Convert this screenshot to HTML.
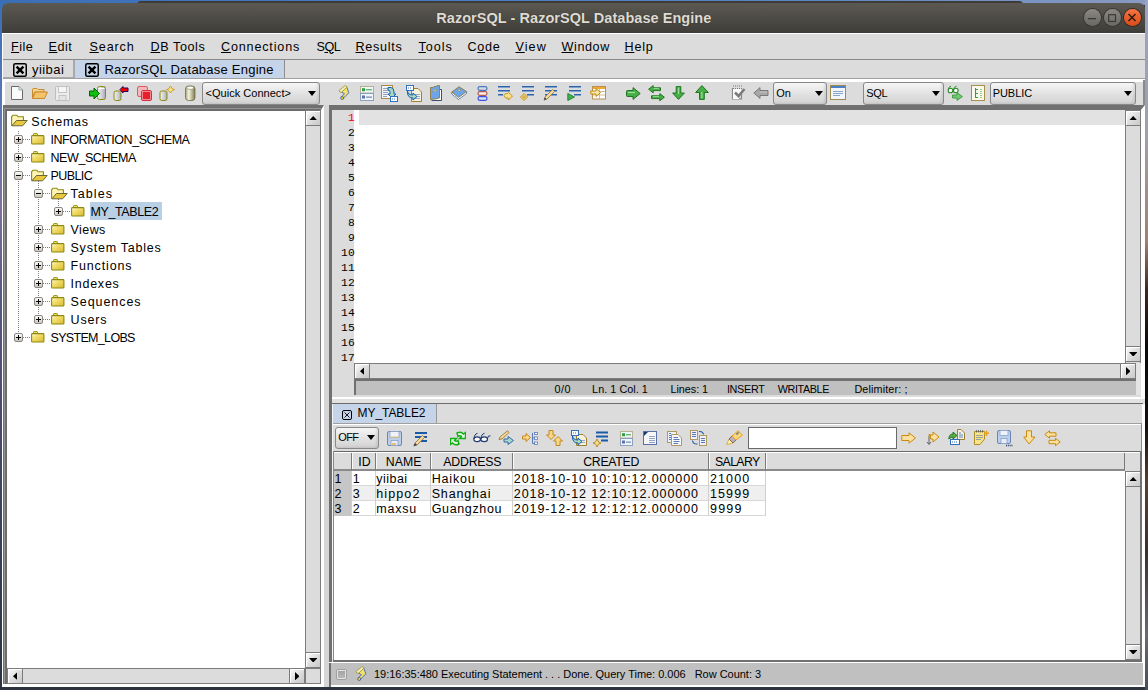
<!DOCTYPE html>
<html><head><meta charset="utf-8">
<style>
*{box-sizing:border-box;margin:0;padding:0}
html,body{width:1148px;height:690px;overflow:hidden}
body{position:relative;background:#2e3340;font-family:"Liberation Sans",sans-serif;color:#000}
.a{position:absolute}
.t{position:absolute;white-space:pre;line-height:1}
u{text-decoration:underline;text-underline-offset:0.5px;text-decoration-thickness:1px}

</style></head><body>
<div class="a" style="left:0px;top:0px;width:1148px;height:690px;background:#2e3340"></div>
<div class="a" style="left:0px;top:0px;width:1148px;height:5px;background:linear-gradient(90deg,#3a6fb6,#4a7cc0 40%,#5b86c2 70%,#8a9ac0)"></div>
<div class="a" style="left:0px;top:0px;width:3px;height:690px;background:linear-gradient(#3a6fb8,#5a78b8 15%,#8070a0 30%,#5a5a88 42%,#4a4a70 60%,#3a4058 80%,#2e3340)"></div>
<div class="a" style="left:1145px;top:0px;width:3px;height:690px;background:linear-gradient(#9aa3c4 0%,#a0a0a8 20%,#a08070 35%,#402820 42%,#0a0a0a 50%,#141010 62%,#5a4030 70%,#3a3030 80%,#6a6a72 92%,#4a4d58)"></div>
<div class="a" style="left:137px;top:1px;width:886px;height:4px;background:#3d3c38;border-radius:4px 4px 0 0"></div>
<div class="a" style="left:2px;top:3px;width:1143px;height:30px;border-radius:6px 6px 0 0;background:linear-gradient(#5c5952,#4a4843 60%,#3f3d39)"></div>
<div class="t" style="letter-spacing:0.045px;left:436.30px;top:11.03px;font-size:14.5px;font-weight:bold;color:#dfdbd2;font-family:'Liberation Sans';text-shadow:0 0 1px #2a2925">RazorSQL - RazorSQL Database Engine</div>
<div class="a" style="left:1083.5px;top:9px;width:17px;height:17px;border-radius:50%;background:linear-gradient(#8a8883,#76746f 60%,#6a6864);box-shadow:0 0 0 1px #38362f"></div>
<div class="a" style="left:1103.5px;top:9px;width:17px;height:17px;border-radius:50%;background:linear-gradient(#8a8883,#76746f 60%,#6a6864);box-shadow:0 0 0 1px #38362f"></div>
<div class="a" style="left:1123.5px;top:9px;width:17px;height:17px;border-radius:50%;background:linear-gradient(#f57545,#e65a28 60%,#d94d1c);box-shadow:0 0 0 1px #3a2a20"></div>
<svg class="a" style="left:1086px;top:11px;" width="12" height="12" viewBox="0 0 12 12"><rect x="2" y="7" width="8" height="1.3" fill="#3a3935"/></svg>
<svg class="a" style="left:1106px;top:11px;" width="12" height="12" viewBox="0 0 12 12"><rect x="2.7" y="3.7" width="6.8" height="6.8" fill="none" stroke="#3a3935" stroke-width="1.2"/></svg>
<svg class="a" style="left:1126px;top:11px;" width="12" height="12" viewBox="0 0 12 12"><path d="M2.5 3 L9.5 10 M9.5 3 L2.5 10" stroke="#2a1a10" stroke-width="1.5"/></svg>
<div class="a" style="left:2px;top:33px;width:1143px;height:654px;background:#fff"></div>
<div class="a" style="left:3px;top:34px;width:1142px;height:651px;background:#dcdcdc"></div>
<div class="a" style="left:3px;top:59px;width:1142px;height:1px;background:#8a8a8a"></div>
<div class="t" style="letter-spacing:0.488px;left:11.00px;top:40.53px;font-size:12.6px;font-weight:normal;color:#000;font-family:'Liberation Sans';"><u>F</u>ile</div>
<div class="t" style="letter-spacing:0.519px;left:48.50px;top:40.53px;font-size:12.6px;font-weight:normal;color:#000;font-family:'Liberation Sans';"><u>E</u>dit</div>
<div class="t" style="letter-spacing:0.871px;left:89.50px;top:40.53px;font-size:12.6px;font-weight:normal;color:#000;font-family:'Liberation Sans';"><u>S</u>earch</div>
<div class="t" style="letter-spacing:0.584px;left:150.50px;top:40.53px;font-size:12.6px;font-weight:normal;color:#000;font-family:'Liberation Sans';"><u>D</u>B Tools</div>
<div class="t" style="letter-spacing:0.824px;left:221.00px;top:40.53px;font-size:12.6px;font-weight:normal;color:#000;font-family:'Liberation Sans';"><u>C</u>onnections</div>
<div class="t" style="letter-spacing:-0.472px;left:316.50px;top:40.53px;font-size:12.6px;font-weight:normal;color:#000;font-family:'Liberation Sans';">S<u>Q</u>L</div>
<div class="t" style="letter-spacing:0.710px;left:355.50px;top:40.53px;font-size:12.6px;font-weight:normal;color:#000;font-family:'Liberation Sans';"><u>R</u>esults</div>
<div class="t" style="letter-spacing:0.963px;left:418.50px;top:40.53px;font-size:12.6px;font-weight:normal;color:#000;font-family:'Liberation Sans';"><u>T</u>ools</div>
<div class="t" style="letter-spacing:0.717px;left:467.50px;top:40.53px;font-size:12.6px;font-weight:normal;color:#000;font-family:'Liberation Sans';">C<u>o</u>de</div>
<div class="t" style="letter-spacing:1.061px;left:515.50px;top:40.53px;font-size:12.6px;font-weight:normal;color:#000;font-family:'Liberation Sans';"><u>V</u>iew</div>
<div class="t" style="letter-spacing:0.593px;left:561.50px;top:40.53px;font-size:12.6px;font-weight:normal;color:#000;font-family:'Liberation Sans';"><u>W</u>indow</div>
<div class="t" style="letter-spacing:0.785px;left:624.50px;top:40.53px;font-size:12.6px;font-weight:normal;color:#000;font-family:'Liberation Sans';"><u>H</u>elp</div>
<div class="a" style="left:3px;top:60px;width:70px;height:17px;background:#dcdcdc"></div>
<div class="a" style="left:73px;top:60px;width:2px;height:18px;background:#a9a9a9"></div>
<div class="a" style="left:3px;top:77px;width:70px;height:1px;background:#a9a9a9"></div>
<div class="a" style="left:75px;top:60px;width:209px;height:18px;background:#c5d4e8"></div>
<div class="a" style="left:284px;top:60px;width:1px;height:18px;background:#8e8e8e"></div>
<div class="a" style="left:3px;top:78px;width:1142px;height:1px;background:#a0a0a0"></div>
<div class="a" style="left:2px;top:79px;width:1143px;height:3px;background:#fff"></div>
<svg class="a" style="left:13px;top:63px;" width="14" height="14" viewBox="0 0 14 14"><rect x="0.75" y="0.75" width="12.5" height="12.5" rx="1.5" fill="none" stroke="#000" stroke-width="1.5"/><path d="M3.6 3.6 L10.4 10.4 M10.4 3.6 L3.6 10.4" stroke="#000" stroke-width="2.5"/></svg>
<div class="t" style="letter-spacing:0.435px;left:32.00px;top:62.80px;font-size:13px;font-weight:normal;color:#000;font-family:'Liberation Sans';">yiibai</div>
<svg class="a" style="left:85px;top:63px;" width="14" height="14" viewBox="0 0 14 14"><rect x="0.75" y="0.75" width="12.5" height="12.5" rx="1.5" fill="none" stroke="#000" stroke-width="1.5"/><path d="M3.6 3.6 L10.4 10.4 M10.4 3.6 L3.6 10.4" stroke="#000" stroke-width="2.5"/></svg>
<div class="t" style="letter-spacing:0.236px;left:104.50px;top:62.80px;font-size:13px;font-weight:normal;color:#000;font-family:'Liberation Sans';">RazorSQL Database Engine</div>
<div class="a" style="left:3px;top:82px;width:2px;height:23px;background:#fff"></div>
<div class="a" style="left:1143px;top:80px;width:2px;height:27px;background:#8a8a8a"></div>
<svg class="a" style="left:11px;top:86px;" width="12" height="14" viewBox="0 0 12 14"><path d="M0.5 0.5 H8 L11.5 4 V13.5 H0.5 Z" fill="#fafafa" stroke="#6a6a6a"/><path d="M8 0.5 V4 H11.5" fill="#d8e4f0" stroke="#9aa"/></svg>
<svg class="a" style="left:32px;top:88px;" width="16" height="11" viewBox="0 0 16 11"><path d="M0.5 1.5 Q0.5 0.5 1.5 0.5 H5 L6 1.5 H12 V4 H2.5 L0.5 10.5 Z" fill="#f6d58e" stroke="#c98a2e"/><path d="M0.5 10.5 L3.5 4 H15.5 L12.5 10.5 Z" fill="#f3c36a" stroke="#c98a2e"/></svg>
<svg class="a" style="left:55px;top:86px;" width="15" height="15" viewBox="0 0 15 15"><rect x="0.5" y="0.5" width="14" height="14" rx="1" fill="#ececec" stroke="#bdbdbd"/><rect x="3.5" y="0.5" width="8" height="6" fill="#f6f6f6" stroke="#c4c4c4"/><rect x="4" y="9.5" width="7" height="5" fill="#e4e4e4" stroke="#c4c4c4"/></svg>
<svg class="a" style="left:89px;top:86px;" width="18" height="15" viewBox="0 0 18 15"><defs><linearGradient id="cg2" x1="0" x2="1"><stop offset="0" stop-color="#f0f0f0"/><stop offset=".5" stop-color="#d4d4d4"/><stop offset="1" stop-color="#a8a8b8"/></linearGradient></defs><rect x="8.5" y="0.5" width="8" height="13" rx="2" fill="url(#cg2)" stroke="#8b8b14"/><path d="M9.5 2.5 H15.5" stroke="#fff" stroke-width="1"/><path d="M0.5 5 H5 V2 L10.5 7.5 L5 13 V10 H0.5 Z" fill="#10c010" stroke="#086008"/></svg>
<svg class="a" style="left:113px;top:86px;" width="16" height="15" viewBox="0 0 16 15"><rect x="1" y="5" width="7" height="9.5" rx="1.8" fill="url(#cg2)" stroke="#8b8b14"/><path d="M7 3.5 L10 0.5 V2 H15 V5.5 H10 V7 Z" fill="#f00" stroke="#200060" stroke-width="1"/></svg>
<svg class="a" style="left:137px;top:86px;" width="15" height="15" viewBox="0 0 15 15"><rect x="0.5" y="0.5" width="10" height="10" rx="1.5" fill="#f4b8bc" stroke="#e05a64"/><rect x="4.5" y="4.5" width="10" height="10" rx="1.5" fill="#e8202e" stroke="#d03040"/><rect x="5.5" y="5.5" width="8" height="8" fill="none" stroke="#f6a0a8" stroke-width="0.8"/></svg>
<svg class="a" style="left:159px;top:85px;" width="16" height="16" viewBox="0 0 16 16"><rect x="1" y="6" width="7" height="9.5" rx="1.8" fill="url(#cg2)" stroke="#8b8b14"/><path d="M11.5 1 L13.5 4 L15.5 4.5 L13.5 5.5 L11.5 8 L9.5 5.5 L7.5 4.5 L9.5 4 Z" fill="#f6e08a" stroke="#c8961e" stroke-width="0.9"/></svg>
<svg class="a" style="left:185px;top:85px;" width="11" height="16" viewBox="0 0 11 16"><defs><linearGradient id="cyl" x1="0" x2="1"><stop offset="0" stop-color="#a8a67a"/><stop offset=".35" stop-color="#f4f2da"/><stop offset="1" stop-color="#7e7c54"/></linearGradient></defs><rect x="0.5" y="1" width="9.5" height="14.5" rx="3" fill="url(#cyl)" stroke="#6e6c46" stroke-width="0.8"/><ellipse cx="5.25" cy="2.8" rx="3.6" ry="1.6" fill="#fff" stroke="#8e8c66" stroke-width="0.7"/></svg>
<div class="a" style="left:202px;top:82px;width:118px;height:23px;border:1px solid #888;border-radius:3px;background:linear-gradient(#f6f6f6,#e4e4e4 45%,#d2d2d2);box-shadow:inset -2px -1px 2px rgba(0,0,0,.08)"></div>
<div class="t" style="letter-spacing:0.030px;left:205.50px;top:88.29px;font-size:11px;font-weight:normal;color:#000;font-family:'Liberation Sans';">&lt;Quick Connect&gt;</div>
<svg class="a" style="left:308.0px;top:90.5px;" width="8" height="5" viewBox="0 0 8 5"><polygon points="0,0 8,0 4.0,5" fill="#000"/></svg>
<svg class="a" style="left:338px;top:85px;" width="12" height="15" viewBox="0 0 12 15"><path d="M3.5 7 L8.8 2.2 L10.8 7.8 L5.2 13.5 L3.2 12 L6.5 8.8 Z" fill="#f2e46a" stroke="#4a64a8" stroke-width="0.9"/><path d="M1 5.6 L6.6 0.9 Q8.6 0.3 9 2.2 L3.5 7.2 Q1.4 7.6 1 5.6 Z" fill="#f2eeb4" stroke="#a89a44" stroke-width="0.9"/><circle cx="4.2" cy="13" r="1.5" fill="#f6dc20" stroke="#3a54a0" stroke-width="0.8"/></svg>
<svg class="a" style="left:360px;top:86px;" width="14" height="15" viewBox="0 0 14 15"><rect x="0.5" y="0.5" width="13" height="6.5" fill="#eef6fa" stroke="#b8b090"/><rect x="0.5" y="7.5" width="13" height="7" fill="#eef6fa" stroke="#8ca0c0"/><rect x="2" y="2.2" width="3" height="3" fill="#30a040"/><rect x="6" y="3.3" width="6" height="1" fill="#30a040"/><rect x="2" y="9.5" width="3" height="3" fill="#6070a8"/><rect x="6" y="10.6" width="6" height="1" fill="#6070a8"/></svg>
<svg class="a" style="left:381px;top:85px;" width="17" height="17" viewBox="0 0 17 17"><rect x="0.5" y="0.5" width="11" height="13" fill="#f2f4f8" stroke="#b08840"/><path d="M2 3.5 H8 M2 5.5 H8 M2 7.5 H7 M2 9.5 H7 M2 11.5 H6" stroke="#8898b8" stroke-width="0.9"/><path d="M7 2.5 H10 Q13 3 13 7 V9 H15 L11 13 L7 9 H9 V7 Q9 5 7 5 Z" fill="#a8d8c0" stroke="#1060b0" stroke-width="1"/><rect x="9.5" y="11.5" width="7" height="5" fill="#fff" stroke="#3070c0"/><path d="M11 14 H15" stroke="#3070c0" stroke-dasharray="1 1"/></svg>
<svg class="a" style="left:406px;top:85px;" width="16" height="17" viewBox="0 0 16 17"><path d="M5.5 3.5 H12 L15.5 7 V16.5 H5.5 Z" fill="#f6f2e2" stroke="#a08030"/><path d="M9 9.5 H14 M9 11.5 H14 M9 13.5 H14" stroke="#90a0c0" stroke-width="0.9"/><rect x="0.5" y="0.5" width="7" height="5" fill="#fff" stroke="#3070c0"/><path d="M2 3 H6" stroke="#3070c0" stroke-dasharray="1 1"/><path d="M1.5 6 Q2 10 7 10 V8 L11 11.5 L7 15 V13 Q1 13 1.5 6 Z" fill="#a8d8c0" stroke="#1060b0" stroke-width="1"/></svg>
<svg class="a" style="left:430px;top:85px;" width="12" height="16" viewBox="0 0 12 16"><path d="M9.5 4.5 H11.5 V15.5 H1.5" fill="#fff" stroke="#2a3a5a" stroke-width="0.9"/><path d="M0.5 2.5 L3 2.5 L4 1.5 L6 1.5 L7 0.8 L9.5 0.5 V13 L7 13.5 L6 14 L4 14 L0.5 14.5 Z" fill="#6ea4e8" stroke="#8a7a40" stroke-width="0.9"/><path d="M2.5 6.5 L4 5 L7 4.5 L5.5 6 Z" fill="#fff" stroke="#a08840" stroke-width="0.7"/></svg>
<svg class="a" style="left:451px;top:86px;" width="16" height="14" viewBox="0 0 16 14"><path d="M0.8 6 V8 L7.5 13.5 L15.5 7.5 V5.5" fill="#fff" stroke="#4a6a8a" stroke-width="0.8"/><path d="M0.8 6 L8 0.8 L15.5 5.5 L7.5 11.5 Z" fill="#6ea4e8" stroke="#8a7a40" stroke-width="0.9"/><path d="M6.5 4.5 L8 3.5 L10 4 L8.5 5 Z" fill="#fff" stroke="#a08840" stroke-width="0.7"/></svg>
<svg class="a" style="left:477px;top:86px;" width="11" height="15" viewBox="0 0 11 15"><rect x="1" y="0.7" width="9" height="3.6" rx="1.8" fill="#d8dce0" stroke="#4a78c0" stroke-width="1.2"/><rect x="1" y="5.7" width="9" height="3.6" rx="1.8" fill="#fff0e8" stroke="#b05a50" stroke-width="1.2"/><rect x="1" y="10.7" width="9" height="3.6" rx="1.8" fill="#d8e0f4" stroke="#3a50e0" stroke-width="1.2"/></svg>
<svg class="a" style="left:498px;top:85px;" width="16" height="16" viewBox="0 0 16 16"><path d="M0 1.8 H12 M0 5.8 H12 M0 9.8 H5" stroke="#2a64b0" stroke-width="1.6"/><path d="M6 10.5 Q7 8 9.5 8.5 L10.5 7.5 L14.5 11 L10.5 15 L10 13 Q9 12 8 13.5 Z" fill="#fbe08a" stroke="#c08a10" stroke-width="0.9"/></svg>
<svg class="a" style="left:520px;top:85px;" width="15" height="16" viewBox="0 0 15 16"><path d="M2 1.8 H14 M2 5.8 H14 M7 9.8 H14" stroke="#2a64b0" stroke-width="1.6"/><path d="M4 8.5 L7.5 12 L4 15.5 L0.5 12 Z" fill="#fbe8a0" stroke="#c08a10" stroke-width="1"/><path d="M4 10 V14 M2 12 H6" stroke="#c08a10" stroke-width="0.8"/></svg>
<svg class="a" style="left:543px;top:85px;" width="15" height="16" viewBox="0 0 15 16"><path d="M2 1.8 H14 M2 5.8 H14 M2 9.8 H14" stroke="#2a64b0" stroke-width="1.6"/><path d="M1 15 L2 12 L9.5 4.5 L11.5 6.5 L4 14 Z" fill="#f0d8a0" stroke="#a07830" stroke-width="0.9"/><path d="M1 15 L1.8 12.5 L3.5 14.2 Z" fill="#203a70"/></svg>
<svg class="a" style="left:567px;top:85px;" width="15" height="16" viewBox="0 0 15 16"><path d="M2 1.8 H14 M2 5.8 H14 M7 9.8 H14" stroke="#2a64b0" stroke-width="1.6"/><path d="M0.8 8.5 L7.5 12 L0.8 15.5 Z" fill="#40b050" stroke="#208030" stroke-width="0.9"/></svg>
<svg class="a" style="left:590px;top:86px;" width="16" height="14" viewBox="0 0 16 14"><rect x="2.5" y="0.5" width="13" height="12.5" fill="#fff" stroke="#b89050"/><rect x="3" y="1" width="12" height="2" fill="#f0a830"/><path d="M3 5.5 H15 M3 9 H15 M9.5 3 V13" stroke="#c8b080" stroke-width="0.8"/><path d="M0.8 5 H6 V2.5 L10.5 6.5 L6 10.5 V8 H0.8 Z" fill="#fbe8a8" stroke="#c08a10" stroke-width="1"/></svg>
<svg class="a" style="left:626px;top:87px;" width="15" height="13" viewBox="0 0 15 13"><path d="M1.5 3.5 H7 V0.6 L14.2 6.5 L7 12.4 V9.5 H1.5 Q0.5 9.5 0.5 8.5 V4.5 Q0.5 3.5 1.5 3.5 Z" fill="#46b046" stroke="#176a17" stroke-width="0.9" stroke-linejoin="round"/><path d="M2 5.5 H9" stroke="#9ae09a" stroke-width="1.2"/></svg>
<svg class="a" style="left:648px;top:85px;" width="17" height="17" viewBox="0 0 17 17"><path d="M0.6 4.2 L5.2 0.6 V2.8 H12.5 V5.6 H5.2 V7.8 Z" fill="#46b046" stroke="#176a17" stroke-width="0.9" stroke-linejoin="round"/><path d="M16.4 12.2 L11.8 15.8 V13.6 H3.5 V10.8 H11.8 V8.6 Z" fill="#46b046" stroke="#176a17" stroke-width="0.9" stroke-linejoin="round"/><path d="M5.5 3.6 H11 M5 11.6 H11" stroke="#9ae09a" stroke-width="0.9"/></svg>
<svg class="a" style="left:672px;top:86px;" width="13" height="14" viewBox="0 0 13 14"><path d="M4.2 0.6 H8.8 V7 H12.4 L6.5 13.4 L0.6 7 H4.2 Z" fill="#46b046" stroke="#176a17" stroke-width="0.9" stroke-linejoin="round"/><path d="M6.5 1.5 V8" stroke="#9ae09a" stroke-width="1.2"/></svg>
<svg class="a" style="left:695px;top:85px;" width="14" height="15" viewBox="0 0 14 15"><path d="M4.5 14.4 H9.3 V7.5 H13.4 L6.9 0.6 L0.6 7.5 H4.5 Z" fill="#46b046" stroke="#176a17" stroke-width="0.9" stroke-linejoin="round"/><path d="M6.9 7 V13.5" stroke="#9ae09a" stroke-width="1.2"/></svg>
<svg class="a" style="left:731px;top:85px;" width="15" height="15" viewBox="0 0 15 15"><path d="M1.5 3 V13.8 H10.5 V9" fill="none" stroke="#8a8a8a" stroke-width="1.2"/><path d="M2 4 H10 V9 L8 11 V14 H2 Z" fill="#fafafa"/><path d="M2 1 H11 M2 3.5 H11" stroke="#7a7a7a" stroke-width="1" stroke-dasharray="1 1"/><path d="M4 7.5 L7.5 11 L13.5 4" fill="none" stroke="#7c7c7c" stroke-width="2.6"/></svg>
<svg class="a" style="left:753px;top:87px;" width="16" height="12" viewBox="0 0 16 12"><path d="M15 3.5 H7 V0.6 L0.8 6 L7 11.4 V8.5 H15 Z" fill="#a8a8a8" stroke="#7a7a7a" stroke-width="1"/><path d="M7 5 H14" stroke="#c4c4c4" stroke-width="1"/></svg>
<div class="a" style="left:773px;top:82px;width:54px;height:23px;border:1px solid #888;border-radius:3px;background:linear-gradient(#f6f6f6,#e4e4e4 45%,#d2d2d2);box-shadow:inset -2px -1px 2px rgba(0,0,0,.08)"></div>
<div class="t" style="letter-spacing:-0.088px;left:776.30px;top:88.29px;font-size:11px;font-weight:normal;color:#000;font-family:'Liberation Sans';">On</div>
<svg class="a" style="left:815.0px;top:90.5px;" width="8" height="5" viewBox="0 0 8 5"><polygon points="0,0 8,0 4.0,5" fill="#000"/></svg>
<svg class="a" style="left:830px;top:85px;" width="16" height="15" viewBox="0 0 16 15"><rect x="0.5" y="0.5" width="15" height="14" fill="#f0f6fc" stroke="#a08a50"/><rect x="1" y="1" width="14" height="2" fill="#4a80c8"/><path d="M3 6.5 H13 M3 8.5 H13 M3 10.5 H10" stroke="#7090c0" stroke-width="0.8"/></svg>
<div class="a" style="left:863px;top:82px;width:81px;height:23px;border:1px solid #888;border-radius:3px;background:linear-gradient(#f6f6f6,#e4e4e4 45%,#d2d2d2);box-shadow:inset -2px -1px 2px rgba(0,0,0,.08)"></div>
<div class="t" style="letter-spacing:-0.308px;left:866.20px;top:88.29px;font-size:11px;font-weight:normal;color:#000;font-family:'Liberation Sans';">SQL</div>
<svg class="a" style="left:931.5px;top:90.5px;" width="8" height="5" viewBox="0 0 8 5"><polygon points="0,0 8,0 4.0,5" fill="#000"/></svg>
<svg class="a" style="left:947px;top:85px;" width="17" height="16" viewBox="0 0 17 16"><circle cx="3.5" cy="5.5" r="2.3" fill="#fff" stroke="#2a8a2a" stroke-width="1.1"/><circle cx="8.8" cy="5.5" r="2.3" fill="#fff" stroke="#2a8a2a" stroke-width="1.1"/><path d="M1.3 5 Q1.5 1.5 4 1.2 M6.6 5 Q7 1.5 9.5 1.2" fill="none" stroke="#2a8a2a" stroke-width="1"/><path d="M5.5 10 H10 V7.6 L15.4 11.6 L10 15.4 V13 H5.5 Z" fill="#70c870" stroke="#3a9a3a" stroke-width="0.9"/></svg>
<svg class="a" style="left:971px;top:85px;" width="14" height="16" viewBox="0 0 14 16"><rect x="0.5" y="0.5" width="13" height="15" fill="#f8f8ec" stroke="#a8904a"/><path d="M4.5 3 V13 M4.5 4.5 H7 M4.5 8.5 H7 M4.5 12.5 H7" stroke="#30a040" stroke-width="1"/><path d="M9.5 4.5 H10.5 M9.5 6.5 H10.5 M9.5 8.5 H10.5 M9.5 10.5 H10.5 M9.5 12.5 H10.5" stroke="#30a040" stroke-width="1"/></svg>
<div class="a" style="left:990px;top:82px;width:146px;height:23px;border:1px solid #888;border-radius:3px;background:linear-gradient(#f6f6f6,#e4e4e4 45%,#d2d2d2);box-shadow:inset -2px -1px 2px rgba(0,0,0,.08)"></div>
<div class="t" style="letter-spacing:-0.050px;left:992.70px;top:88.29px;font-size:11px;font-weight:normal;color:#000;font-family:'Liberation Sans';">PUBLIC</div>
<svg class="a" style="left:1123.7px;top:90.5px;" width="8" height="5" viewBox="0 0 8 5"><polygon points="0,0 8,0 4.0,5" fill="#000"/></svg>
<div class="a" style="left:3px;top:105px;width:318px;height:579px;background:#707070"></div>
<div class="a" style="left:4px;top:108px;width:317px;height:576px;background:#959595"></div>
<div class="a" style="left:5px;top:109px;width:316px;height:575px;background:#6c6c6c"></div>
<div class="a" style="left:7px;top:111px;width:298px;height:557px;background:#fff"></div>
<div class="a" style="left:305px;top:110px;width:16px;height:558px;background:#dcdcdc;border-left:1px solid #7c7c7c;border-right:1px solid #7c7c7c"></div>
<div class="a" style="left:305px;top:110px;width:16px;height:16px;border:1px solid #7c7c7c;background:linear-gradient(135deg,#fdfdfd,#dedede 50%,#c8c8c8);box-shadow:inset 1px 1px 0 #fff"></div>
<svg class="a" style="left:308.8px;top:115.7px;" width="8.4" height="4.6" viewBox="0 0 8.4 4.6"><polygon points="0,4.6 8.4,4.6 4.2,0" fill="#000"/></svg>
<div class="a" style="left:305px;top:652px;width:16px;height:16px;border:1px solid #7c7c7c;background:linear-gradient(135deg,#fdfdfd,#dedede 50%,#c8c8c8);box-shadow:inset 1px 1px 0 #fff"></div>
<svg class="a" style="left:308.8px;top:657.7px;" width="8.4" height="4.6" viewBox="0 0 8.4 4.6"><polygon points="0,0 8.4,0 4.2,4.6" fill="#000"/></svg>
<div class="a" style="left:7px;top:668px;width:314px;height:16px;background:#dcdcdc;border-top:1px solid #7c7c7c;border-bottom:1px solid #7c7c7c"></div>
<div class="a" style="left:7px;top:668px;width:16px;height:16px;border:1px solid #7c7c7c;background:linear-gradient(135deg,#fdfdfd,#dedede 50%,#c8c8c8);box-shadow:inset 1px 1px 0 #fff"></div>
<svg class="a" style="left:12.7px;top:671.8px;" width="4.6" height="8.4" viewBox="0 0 4.6 8.4"><polygon points="4.6,0 4.6,8.4 0,4.2" fill="#000"/></svg>
<div class="a" style="left:289px;top:668px;width:16px;height:16px;border:1px solid #7c7c7c;background:linear-gradient(135deg,#fdfdfd,#dedede 50%,#c8c8c8);box-shadow:inset 1px 1px 0 #fff"></div>
<svg class="a" style="left:294.7px;top:671.8px;" width="4.6" height="8.4" viewBox="0 0 4.6 8.4"><polygon points="0,0 0,8.4 4.6,4.2" fill="#000"/></svg>
<div class="a" style="left:305px;top:668px;width:16px;height:16px;background:#dcdcdc;border:1px solid #7c7c7c"></div>
<div class="a" style="left:3px;top:684px;width:318px;height:3px;background:#fff"></div>
<div class="a" style="left:321px;top:105px;width:3px;height:582px;background:#fff"></div>
<div class="a" style="left:324px;top:105px;width:5px;height:582px;background:#d6d6d6"></div>
<svg class="a" style="left:321px;top:105px;" width="3" height="5" viewBox="0 0 3 5"><polygon points="0,0 3,0 0,5" fill="#707070"/></svg>
<svg class="a" style="left:11px;top:114px;" width="17" height="13" viewBox="0 0 17 13"><path d="M0.6 11.8 V2.8 L2 1.2 H5.8 L7 2.8 H12.4 V6.5" fill="#fff4b8" stroke="#8a8a10" stroke-width="1.1"/><path d="M0.9 11.8 L5.4 6.5 H16.2 L11.6 11.8 Z" fill="#e8c840" stroke="#5a5a28" stroke-width="0.9"/></svg>
<div class="t" style="letter-spacing:0.773px;left:31.30px;top:115.92px;font-size:12.5px;font-weight:normal;color:#000;font-family:'Liberation Sans';">Schemas</div>
<svg class="a" style="left:18px;top:131px;" width="1" height="207" viewBox="0 0 1 207"><line x1="0.5" y1="0" x2="0.5" y2="207" stroke="#808080" stroke-dasharray="1 1"/></svg>
<svg class="a" style="left:38px;top:181px;" width="1" height="139" viewBox="0 0 1 139"><line x1="0.5" y1="0" x2="0.5" y2="139" stroke="#808080" stroke-dasharray="1 1"/></svg>
<svg class="a" style="left:58px;top:199px;" width="1" height="13" viewBox="0 0 1 13"><line x1="0.5" y1="0" x2="0.5" y2="13" stroke="#808080" stroke-dasharray="1 1"/></svg>
<svg class="a" style="left:23px;top:139px;" width="7" height="1" viewBox="0 0 7 1"><line x1="0" y1="0.5" x2="7" y2="0.5" stroke="#808080" stroke-dasharray="1 1"/></svg>
<svg class="a" style="left:14px;top:135.0px;" width="9" height="9" viewBox="0 0 9 9"><defs><linearGradient id="pg" x1="0" y1="0" x2="0" y2="1"><stop offset="0" stop-color="#fff"/><stop offset="1" stop-color="#c8c4bc"/></linearGradient></defs><rect x="0.5" y="0.5" width="8" height="8" rx="1.5" fill="url(#pg)" stroke="#8a8680"/><path d="M2 4.5 H7" stroke="#000" stroke-width="1"/><path d="M4.5 2 V7" stroke="#000" stroke-width="1"/></svg>
<svg class="a" style="left:31px;top:131.5px;" width="14" height="13" viewBox="0 0 14 13"><defs><linearGradient id="fg" x1="0" y1="0" x2="1" y2="1"><stop offset="0" stop-color="#fffce8"/><stop offset=".35" stop-color="#f4e070"/><stop offset="1" stop-color="#d8b830"/></linearGradient></defs><path d="M2.5 3.5 V2.2 Q2.5 1.5 3.2 1.5 H5.8 Q6.5 1.5 6.5 2.2 V3.5" fill="#f0dc60" stroke="#8a8a10" stroke-width="0.9"/><rect x="0.6" y="3.6" width="12.3" height="8.4" rx="0.8" fill="url(#fg)" stroke="#8a8a10" stroke-width="1.1"/></svg>
<div class="t" style="letter-spacing:-0.444px;left:50.50px;top:134.12px;font-size:12.5px;font-weight:normal;color:#000;font-family:'Liberation Sans';">INFORMATION_SCHEMA</div>
<svg class="a" style="left:23px;top:157px;" width="7" height="1" viewBox="0 0 7 1"><line x1="0" y1="0.5" x2="7" y2="0.5" stroke="#808080" stroke-dasharray="1 1"/></svg>
<svg class="a" style="left:14px;top:153.0px;" width="9" height="9" viewBox="0 0 9 9"><defs><linearGradient id="pg" x1="0" y1="0" x2="0" y2="1"><stop offset="0" stop-color="#fff"/><stop offset="1" stop-color="#c8c4bc"/></linearGradient></defs><rect x="0.5" y="0.5" width="8" height="8" rx="1.5" fill="url(#pg)" stroke="#8a8680"/><path d="M2 4.5 H7" stroke="#000" stroke-width="1"/><path d="M4.5 2 V7" stroke="#000" stroke-width="1"/></svg>
<svg class="a" style="left:31px;top:149.5px;" width="14" height="13" viewBox="0 0 14 13"><defs><linearGradient id="fg" x1="0" y1="0" x2="1" y2="1"><stop offset="0" stop-color="#fffce8"/><stop offset=".35" stop-color="#f4e070"/><stop offset="1" stop-color="#d8b830"/></linearGradient></defs><path d="M2.5 3.5 V2.2 Q2.5 1.5 3.2 1.5 H5.8 Q6.5 1.5 6.5 2.2 V3.5" fill="#f0dc60" stroke="#8a8a10" stroke-width="0.9"/><rect x="0.6" y="3.6" width="12.3" height="8.4" rx="0.8" fill="url(#fg)" stroke="#8a8a10" stroke-width="1.1"/></svg>
<div class="t" style="letter-spacing:-0.416px;left:50.50px;top:152.12px;font-size:12.5px;font-weight:normal;color:#000;font-family:'Liberation Sans';">NEW_SCHEMA</div>
<svg class="a" style="left:23px;top:175px;" width="7" height="1" viewBox="0 0 7 1"><line x1="0" y1="0.5" x2="7" y2="0.5" stroke="#808080" stroke-dasharray="1 1"/></svg>
<svg class="a" style="left:14px;top:171.0px;" width="9" height="9" viewBox="0 0 9 9"><defs><linearGradient id="pg" x1="0" y1="0" x2="0" y2="1"><stop offset="0" stop-color="#fff"/><stop offset="1" stop-color="#c8c4bc"/></linearGradient></defs><rect x="0.5" y="0.5" width="8" height="8" rx="1.5" fill="url(#pg)" stroke="#8a8680"/><path d="M2 4.5 H7" stroke="#000" stroke-width="1"/></svg>
<svg class="a" style="left:31px;top:168.5px;" width="17" height="13" viewBox="0 0 17 13"><path d="M0.6 11.8 V2.8 L2 1.2 H5.8 L7 2.8 H12.4 V6.5" fill="#fff4b8" stroke="#8a8a10" stroke-width="1.1"/><path d="M0.9 11.8 L5.4 6.5 H16.2 L11.6 11.8 Z" fill="#e8c840" stroke="#5a5a28" stroke-width="0.9"/></svg>
<div class="t" style="letter-spacing:-0.581px;left:50.50px;top:170.12px;font-size:12.5px;font-weight:normal;color:#000;font-family:'Liberation Sans';">PUBLIC</div>
<svg class="a" style="left:43px;top:193px;" width="7" height="1" viewBox="0 0 7 1"><line x1="0" y1="0.5" x2="7" y2="0.5" stroke="#808080" stroke-dasharray="1 1"/></svg>
<svg class="a" style="left:34px;top:189.0px;" width="9" height="9" viewBox="0 0 9 9"><defs><linearGradient id="pg" x1="0" y1="0" x2="0" y2="1"><stop offset="0" stop-color="#fff"/><stop offset="1" stop-color="#c8c4bc"/></linearGradient></defs><rect x="0.5" y="0.5" width="8" height="8" rx="1.5" fill="url(#pg)" stroke="#8a8680"/><path d="M2 4.5 H7" stroke="#000" stroke-width="1"/></svg>
<svg class="a" style="left:51px;top:186.5px;" width="17" height="13" viewBox="0 0 17 13"><path d="M0.6 11.8 V2.8 L2 1.2 H5.8 L7 2.8 H12.4 V6.5" fill="#fff4b8" stroke="#8a8a10" stroke-width="1.1"/><path d="M0.9 11.8 L5.4 6.5 H16.2 L11.6 11.8 Z" fill="#e8c840" stroke="#5a5a28" stroke-width="0.9"/></svg>
<div class="t" style="letter-spacing:1.062px;left:70.50px;top:188.12px;font-size:12.5px;font-weight:normal;color:#000;font-family:'Liberation Sans';">Tables</div>
<svg class="a" style="left:63px;top:211px;" width="7" height="1" viewBox="0 0 7 1"><line x1="0" y1="0.5" x2="7" y2="0.5" stroke="#808080" stroke-dasharray="1 1"/></svg>
<svg class="a" style="left:54px;top:207.0px;" width="9" height="9" viewBox="0 0 9 9"><defs><linearGradient id="pg" x1="0" y1="0" x2="0" y2="1"><stop offset="0" stop-color="#fff"/><stop offset="1" stop-color="#c8c4bc"/></linearGradient></defs><rect x="0.5" y="0.5" width="8" height="8" rx="1.5" fill="url(#pg)" stroke="#8a8680"/><path d="M2 4.5 H7" stroke="#000" stroke-width="1"/><path d="M4.5 2 V7" stroke="#000" stroke-width="1"/></svg>
<div class="a" style="left:90px;top:202px;width:72px;height:18px;background:#b8cfe5"></div>
<svg class="a" style="left:71px;top:203.5px;" width="14" height="13" viewBox="0 0 14 13"><defs><linearGradient id="fg" x1="0" y1="0" x2="1" y2="1"><stop offset="0" stop-color="#fffce8"/><stop offset=".35" stop-color="#f4e070"/><stop offset="1" stop-color="#d8b830"/></linearGradient></defs><path d="M2.5 3.5 V2.2 Q2.5 1.5 3.2 1.5 H5.8 Q6.5 1.5 6.5 2.2 V3.5" fill="#f0dc60" stroke="#8a8a10" stroke-width="0.9"/><rect x="0.6" y="3.6" width="12.3" height="8.4" rx="0.8" fill="url(#fg)" stroke="#8a8a10" stroke-width="1.1"/></svg>
<div class="t" style="letter-spacing:-0.385px;left:90.50px;top:206.12px;font-size:12.5px;font-weight:normal;color:#000;font-family:'Liberation Sans';">MY_TABLE2</div>
<svg class="a" style="left:43px;top:229px;" width="7" height="1" viewBox="0 0 7 1"><line x1="0" y1="0.5" x2="7" y2="0.5" stroke="#808080" stroke-dasharray="1 1"/></svg>
<svg class="a" style="left:34px;top:225.0px;" width="9" height="9" viewBox="0 0 9 9"><defs><linearGradient id="pg" x1="0" y1="0" x2="0" y2="1"><stop offset="0" stop-color="#fff"/><stop offset="1" stop-color="#c8c4bc"/></linearGradient></defs><rect x="0.5" y="0.5" width="8" height="8" rx="1.5" fill="url(#pg)" stroke="#8a8680"/><path d="M2 4.5 H7" stroke="#000" stroke-width="1"/><path d="M4.5 2 V7" stroke="#000" stroke-width="1"/></svg>
<svg class="a" style="left:51px;top:221.5px;" width="14" height="13" viewBox="0 0 14 13"><defs><linearGradient id="fg" x1="0" y1="0" x2="1" y2="1"><stop offset="0" stop-color="#fffce8"/><stop offset=".35" stop-color="#f4e070"/><stop offset="1" stop-color="#d8b830"/></linearGradient></defs><path d="M2.5 3.5 V2.2 Q2.5 1.5 3.2 1.5 H5.8 Q6.5 1.5 6.5 2.2 V3.5" fill="#f0dc60" stroke="#8a8a10" stroke-width="0.9"/><rect x="0.6" y="3.6" width="12.3" height="8.4" rx="0.8" fill="url(#fg)" stroke="#8a8a10" stroke-width="1.1"/></svg>
<div class="t" style="letter-spacing:0.431px;left:70.50px;top:224.12px;font-size:12.5px;font-weight:normal;color:#000;font-family:'Liberation Sans';">Views</div>
<svg class="a" style="left:43px;top:247px;" width="7" height="1" viewBox="0 0 7 1"><line x1="0" y1="0.5" x2="7" y2="0.5" stroke="#808080" stroke-dasharray="1 1"/></svg>
<svg class="a" style="left:34px;top:243.0px;" width="9" height="9" viewBox="0 0 9 9"><defs><linearGradient id="pg" x1="0" y1="0" x2="0" y2="1"><stop offset="0" stop-color="#fff"/><stop offset="1" stop-color="#c8c4bc"/></linearGradient></defs><rect x="0.5" y="0.5" width="8" height="8" rx="1.5" fill="url(#pg)" stroke="#8a8680"/><path d="M2 4.5 H7" stroke="#000" stroke-width="1"/><path d="M4.5 2 V7" stroke="#000" stroke-width="1"/></svg>
<svg class="a" style="left:51px;top:239.5px;" width="14" height="13" viewBox="0 0 14 13"><defs><linearGradient id="fg" x1="0" y1="0" x2="1" y2="1"><stop offset="0" stop-color="#fffce8"/><stop offset=".35" stop-color="#f4e070"/><stop offset="1" stop-color="#d8b830"/></linearGradient></defs><path d="M2.5 3.5 V2.2 Q2.5 1.5 3.2 1.5 H5.8 Q6.5 1.5 6.5 2.2 V3.5" fill="#f0dc60" stroke="#8a8a10" stroke-width="0.9"/><rect x="0.6" y="3.6" width="12.3" height="8.4" rx="0.8" fill="url(#fg)" stroke="#8a8a10" stroke-width="1.1"/></svg>
<div class="t" style="letter-spacing:0.774px;left:70.50px;top:242.12px;font-size:12.5px;font-weight:normal;color:#000;font-family:'Liberation Sans';">System Tables</div>
<svg class="a" style="left:43px;top:265px;" width="7" height="1" viewBox="0 0 7 1"><line x1="0" y1="0.5" x2="7" y2="0.5" stroke="#808080" stroke-dasharray="1 1"/></svg>
<svg class="a" style="left:34px;top:261.0px;" width="9" height="9" viewBox="0 0 9 9"><defs><linearGradient id="pg" x1="0" y1="0" x2="0" y2="1"><stop offset="0" stop-color="#fff"/><stop offset="1" stop-color="#c8c4bc"/></linearGradient></defs><rect x="0.5" y="0.5" width="8" height="8" rx="1.5" fill="url(#pg)" stroke="#8a8680"/><path d="M2 4.5 H7" stroke="#000" stroke-width="1"/><path d="M4.5 2 V7" stroke="#000" stroke-width="1"/></svg>
<svg class="a" style="left:51px;top:257.5px;" width="14" height="13" viewBox="0 0 14 13"><defs><linearGradient id="fg" x1="0" y1="0" x2="1" y2="1"><stop offset="0" stop-color="#fffce8"/><stop offset=".35" stop-color="#f4e070"/><stop offset="1" stop-color="#d8b830"/></linearGradient></defs><path d="M2.5 3.5 V2.2 Q2.5 1.5 3.2 1.5 H5.8 Q6.5 1.5 6.5 2.2 V3.5" fill="#f0dc60" stroke="#8a8a10" stroke-width="0.9"/><rect x="0.6" y="3.6" width="12.3" height="8.4" rx="0.8" fill="url(#fg)" stroke="#8a8a10" stroke-width="1.1"/></svg>
<div class="t" style="letter-spacing:0.856px;left:70.50px;top:260.12px;font-size:12.5px;font-weight:normal;color:#000;font-family:'Liberation Sans';">Functions</div>
<svg class="a" style="left:43px;top:283px;" width="7" height="1" viewBox="0 0 7 1"><line x1="0" y1="0.5" x2="7" y2="0.5" stroke="#808080" stroke-dasharray="1 1"/></svg>
<svg class="a" style="left:34px;top:279.0px;" width="9" height="9" viewBox="0 0 9 9"><defs><linearGradient id="pg" x1="0" y1="0" x2="0" y2="1"><stop offset="0" stop-color="#fff"/><stop offset="1" stop-color="#c8c4bc"/></linearGradient></defs><rect x="0.5" y="0.5" width="8" height="8" rx="1.5" fill="url(#pg)" stroke="#8a8680"/><path d="M2 4.5 H7" stroke="#000" stroke-width="1"/><path d="M4.5 2 V7" stroke="#000" stroke-width="1"/></svg>
<svg class="a" style="left:51px;top:275.5px;" width="14" height="13" viewBox="0 0 14 13"><defs><linearGradient id="fg" x1="0" y1="0" x2="1" y2="1"><stop offset="0" stop-color="#fffce8"/><stop offset=".35" stop-color="#f4e070"/><stop offset="1" stop-color="#d8b830"/></linearGradient></defs><path d="M2.5 3.5 V2.2 Q2.5 1.5 3.2 1.5 H5.8 Q6.5 1.5 6.5 2.2 V3.5" fill="#f0dc60" stroke="#8a8a10" stroke-width="0.9"/><rect x="0.6" y="3.6" width="12.3" height="8.4" rx="0.8" fill="url(#fg)" stroke="#8a8a10" stroke-width="1.1"/></svg>
<div class="t" style="letter-spacing:0.761px;left:70.50px;top:278.12px;font-size:12.5px;font-weight:normal;color:#000;font-family:'Liberation Sans';">Indexes</div>
<svg class="a" style="left:43px;top:301px;" width="7" height="1" viewBox="0 0 7 1"><line x1="0" y1="0.5" x2="7" y2="0.5" stroke="#808080" stroke-dasharray="1 1"/></svg>
<svg class="a" style="left:34px;top:297.0px;" width="9" height="9" viewBox="0 0 9 9"><defs><linearGradient id="pg" x1="0" y1="0" x2="0" y2="1"><stop offset="0" stop-color="#fff"/><stop offset="1" stop-color="#c8c4bc"/></linearGradient></defs><rect x="0.5" y="0.5" width="8" height="8" rx="1.5" fill="url(#pg)" stroke="#8a8680"/><path d="M2 4.5 H7" stroke="#000" stroke-width="1"/><path d="M4.5 2 V7" stroke="#000" stroke-width="1"/></svg>
<svg class="a" style="left:51px;top:293.5px;" width="14" height="13" viewBox="0 0 14 13"><defs><linearGradient id="fg" x1="0" y1="0" x2="1" y2="1"><stop offset="0" stop-color="#fffce8"/><stop offset=".35" stop-color="#f4e070"/><stop offset="1" stop-color="#d8b830"/></linearGradient></defs><path d="M2.5 3.5 V2.2 Q2.5 1.5 3.2 1.5 H5.8 Q6.5 1.5 6.5 2.2 V3.5" fill="#f0dc60" stroke="#8a8a10" stroke-width="0.9"/><rect x="0.6" y="3.6" width="12.3" height="8.4" rx="0.8" fill="url(#fg)" stroke="#8a8a10" stroke-width="1.1"/></svg>
<div class="t" style="letter-spacing:0.936px;left:70.50px;top:296.12px;font-size:12.5px;font-weight:normal;color:#000;font-family:'Liberation Sans';">Sequences</div>
<svg class="a" style="left:43px;top:319px;" width="7" height="1" viewBox="0 0 7 1"><line x1="0" y1="0.5" x2="7" y2="0.5" stroke="#808080" stroke-dasharray="1 1"/></svg>
<svg class="a" style="left:34px;top:315.0px;" width="9" height="9" viewBox="0 0 9 9"><defs><linearGradient id="pg" x1="0" y1="0" x2="0" y2="1"><stop offset="0" stop-color="#fff"/><stop offset="1" stop-color="#c8c4bc"/></linearGradient></defs><rect x="0.5" y="0.5" width="8" height="8" rx="1.5" fill="url(#pg)" stroke="#8a8680"/><path d="M2 4.5 H7" stroke="#000" stroke-width="1"/><path d="M4.5 2 V7" stroke="#000" stroke-width="1"/></svg>
<svg class="a" style="left:51px;top:311.5px;" width="14" height="13" viewBox="0 0 14 13"><defs><linearGradient id="fg" x1="0" y1="0" x2="1" y2="1"><stop offset="0" stop-color="#fffce8"/><stop offset=".35" stop-color="#f4e070"/><stop offset="1" stop-color="#d8b830"/></linearGradient></defs><path d="M2.5 3.5 V2.2 Q2.5 1.5 3.2 1.5 H5.8 Q6.5 1.5 6.5 2.2 V3.5" fill="#f0dc60" stroke="#8a8a10" stroke-width="0.9"/><rect x="0.6" y="3.6" width="12.3" height="8.4" rx="0.8" fill="url(#fg)" stroke="#8a8a10" stroke-width="1.1"/></svg>
<div class="t" style="letter-spacing:0.848px;left:70.50px;top:314.12px;font-size:12.5px;font-weight:normal;color:#000;font-family:'Liberation Sans';">Users</div>
<svg class="a" style="left:23px;top:337px;" width="7" height="1" viewBox="0 0 7 1"><line x1="0" y1="0.5" x2="7" y2="0.5" stroke="#808080" stroke-dasharray="1 1"/></svg>
<svg class="a" style="left:14px;top:333.0px;" width="9" height="9" viewBox="0 0 9 9"><defs><linearGradient id="pg" x1="0" y1="0" x2="0" y2="1"><stop offset="0" stop-color="#fff"/><stop offset="1" stop-color="#c8c4bc"/></linearGradient></defs><rect x="0.5" y="0.5" width="8" height="8" rx="1.5" fill="url(#pg)" stroke="#8a8680"/><path d="M2 4.5 H7" stroke="#000" stroke-width="1"/><path d="M4.5 2 V7" stroke="#000" stroke-width="1"/></svg>
<svg class="a" style="left:31px;top:329.5px;" width="14" height="13" viewBox="0 0 14 13"><defs><linearGradient id="fg" x1="0" y1="0" x2="1" y2="1"><stop offset="0" stop-color="#fffce8"/><stop offset=".35" stop-color="#f4e070"/><stop offset="1" stop-color="#d8b830"/></linearGradient></defs><path d="M2.5 3.5 V2.2 Q2.5 1.5 3.2 1.5 H5.8 Q6.5 1.5 6.5 2.2 V3.5" fill="#f0dc60" stroke="#8a8a10" stroke-width="0.9"/><rect x="0.6" y="3.6" width="12.3" height="8.4" rx="0.8" fill="url(#fg)" stroke="#8a8a10" stroke-width="1.1"/></svg>
<div class="t" style="letter-spacing:-0.675px;left:50.50px;top:332.12px;font-size:12.5px;font-weight:normal;color:#000;font-family:'Liberation Sans';">SYSTEM_LOBS</div>
<div class="a" style="left:329px;top:105px;width:812px;height:5px;background:#707070"></div>
<svg class="a" style="left:1141px;top:105px;" width="4" height="5" viewBox="0 0 4 5"><polygon points="0,0 4,0 0,5" fill="#707070"/><polygon points="4,0 4,5 0,5" fill="#fff"/></svg>
<div class="a" style="left:329px;top:105px;width:3px;height:582px;background:#707070"></div>
<div class="a" style="left:1141px;top:110px;width:4px;height:287px;background:#fff"></div>
<div class="a" style="left:332px;top:110px;width:22px;height:287px;background:#dcdcdc"></div>
<div class="a" style="left:354px;top:110px;width:771px;height:253px;background:#fff"></div>
<div class="a" style="left:359px;top:110px;width:766px;height:15px;background:#e2e2e2"></div>
<div class="t" style="left:348.00px;top:112.93px;font-size:11.3px;font-weight:normal;color:#f00;font-family:'Liberation Mono';letter-spacing:0.22px">1</div>
<div class="t" style="left:348.00px;top:127.93px;font-size:11.3px;font-weight:normal;color:#000;font-family:'Liberation Mono';letter-spacing:0.22px">2</div>
<div class="t" style="left:348.00px;top:142.93px;font-size:11.3px;font-weight:normal;color:#000;font-family:'Liberation Mono';letter-spacing:0.22px">3</div>
<div class="t" style="left:348.00px;top:157.93px;font-size:11.3px;font-weight:normal;color:#000;font-family:'Liberation Mono';letter-spacing:0.22px">4</div>
<div class="t" style="left:348.00px;top:172.93px;font-size:11.3px;font-weight:normal;color:#000;font-family:'Liberation Mono';letter-spacing:0.22px">5</div>
<div class="t" style="left:348.00px;top:187.93px;font-size:11.3px;font-weight:normal;color:#000;font-family:'Liberation Mono';letter-spacing:0.22px">6</div>
<div class="t" style="left:348.00px;top:202.93px;font-size:11.3px;font-weight:normal;color:#000;font-family:'Liberation Mono';letter-spacing:0.22px">7</div>
<div class="t" style="left:348.00px;top:217.93px;font-size:11.3px;font-weight:normal;color:#000;font-family:'Liberation Mono';letter-spacing:0.22px">8</div>
<div class="t" style="left:348.00px;top:232.93px;font-size:11.3px;font-weight:normal;color:#000;font-family:'Liberation Mono';letter-spacing:0.22px">9</div>
<div class="t" style="left:341.00px;top:247.93px;font-size:11.3px;font-weight:normal;color:#000;font-family:'Liberation Mono';letter-spacing:0.22px">10</div>
<div class="t" style="left:341.00px;top:262.93px;font-size:11.3px;font-weight:normal;color:#000;font-family:'Liberation Mono';letter-spacing:0.22px">11</div>
<div class="t" style="left:341.00px;top:277.93px;font-size:11.3px;font-weight:normal;color:#000;font-family:'Liberation Mono';letter-spacing:0.22px">12</div>
<div class="t" style="left:341.00px;top:292.93px;font-size:11.3px;font-weight:normal;color:#000;font-family:'Liberation Mono';letter-spacing:0.22px">13</div>
<div class="t" style="left:341.00px;top:307.93px;font-size:11.3px;font-weight:normal;color:#000;font-family:'Liberation Mono';letter-spacing:0.22px">14</div>
<div class="t" style="left:341.00px;top:322.93px;font-size:11.3px;font-weight:normal;color:#000;font-family:'Liberation Mono';letter-spacing:0.22px">15</div>
<div class="t" style="left:341.00px;top:337.93px;font-size:11.3px;font-weight:normal;color:#000;font-family:'Liberation Mono';letter-spacing:0.22px">16</div>
<div class="t" style="left:341.00px;top:352.93px;font-size:11.3px;font-weight:normal;color:#000;font-family:'Liberation Mono';letter-spacing:0.22px">17</div>
<div class="a" style="left:1125px;top:110px;width:16px;height:253px;background:#dcdcdc;border-left:1px solid #7c7c7c;border-right:1px solid #7c7c7c"></div>
<div class="a" style="left:1125px;top:110px;width:16px;height:16px;border:1px solid #7c7c7c;background:linear-gradient(135deg,#fdfdfd,#dedede 50%,#c8c8c8);box-shadow:inset 1px 1px 0 #fff"></div>
<svg class="a" style="left:1128.8px;top:115.7px;" width="8.4" height="4.6" viewBox="0 0 8.4 4.6"><polygon points="0,4.6 8.4,4.6 4.2,0" fill="#000"/></svg>
<div class="a" style="left:1125px;top:346px;width:16px;height:16px;border:1px solid #7c7c7c;background:linear-gradient(135deg,#fdfdfd,#dedede 50%,#c8c8c8);box-shadow:inset 1px 1px 0 #fff"></div>
<svg class="a" style="left:1128.8px;top:351.7px;" width="8.4" height="4.6" viewBox="0 0 8.4 4.6"><polygon points="0,0 8.4,0 4.2,4.6" fill="#000"/></svg>
<div class="a" style="left:354px;top:363px;width:782px;height:16px;background:#dcdcdc;border-top:1px solid #7c7c7c;border-bottom:1px solid #7c7c7c"></div>
<div class="a" style="left:354px;top:363px;width:16px;height:16px;border:1px solid #7c7c7c;background:linear-gradient(135deg,#fdfdfd,#dedede 50%,#c8c8c8);box-shadow:inset 1px 1px 0 #fff"></div>
<svg class="a" style="left:359.7px;top:366.8px;" width="4.6" height="8.4" viewBox="0 0 4.6 8.4"><polygon points="4.6,0 4.6,8.4 0,4.2" fill="#000"/></svg>
<div class="a" style="left:1120px;top:363px;width:16px;height:16px;border:1px solid #7c7c7c;background:linear-gradient(135deg,#fdfdfd,#dedede 50%,#c8c8c8);box-shadow:inset 1px 1px 0 #fff"></div>
<svg class="a" style="left:1125.7px;top:366.8px;" width="4.6" height="8.4" viewBox="0 0 4.6 8.4"><polygon points="0,0 0,8.4 4.6,4.2" fill="#000"/></svg>
<div class="a" style="left:1136px;top:363px;width:5px;height:34px;background:#e4e4e4"></div>
<div class="a" style="left:354px;top:379px;width:782px;height:16px;background:#707070"></div>
<div class="a" style="left:356px;top:381px;width:780px;height:14px;background:#c0c0c0"></div>
<div class="t" style="letter-spacing:0.532px;left:554.40px;top:383.66px;font-size:10.8px;font-weight:normal;color:#000;font-family:'Liberation Sans';">0/0</div>
<div class="t" style="letter-spacing:0.051px;left:592.10px;top:383.66px;font-size:10.8px;font-weight:normal;color:#000;font-family:'Liberation Sans';">Ln. 1 Col. 1</div>
<div class="t" style="letter-spacing:-0.035px;left:670.50px;top:383.66px;font-size:10.8px;font-weight:normal;color:#000;font-family:'Liberation Sans';">Lines: 1</div>
<div class="t" style="letter-spacing:-0.285px;left:726.90px;top:383.66px;font-size:10.8px;font-weight:normal;color:#000;font-family:'Liberation Sans';">INSERT</div>
<div class="t" style="letter-spacing:-0.402px;left:777.80px;top:383.66px;font-size:10.8px;font-weight:normal;color:#000;font-family:'Liberation Sans';">WRITABLE</div>
<div class="t" style="letter-spacing:0.135px;left:854.40px;top:383.66px;font-size:10.8px;font-weight:normal;color:#000;font-family:'Liberation Sans';">Delimiter: ;</div>
<div class="a" style="left:354px;top:395px;width:787px;height:2px;background:#dcdcdc"></div>
<div class="a" style="left:332px;top:397px;width:813px;height:1.5px;background:#fff"></div>
<div class="a" style="left:332px;top:398.5px;width:813px;height:4.5px;background:#e2e2e2"></div>
<div class="a" style="left:332px;top:403px;width:811px;height:1px;background:#6c6c6c"></div>
<div class="a" style="left:332px;top:404px;width:811px;height:19px;background:#dcdcdc"></div>
<div class="a" style="left:332px;top:404px;width:105px;height:19px;background:#c5d4e8"></div>
<div class="a" style="left:436px;top:404px;width:1px;height:19px;background:#9a9a9a"></div>
<svg class="a" style="left:342px;top:410px;" width="10" height="10" viewBox="0 0 10 10"><rect x="0.5" y="0.5" width="9" height="9" rx="1.5" fill="none" stroke="#000" stroke-width="1"/><path d="M2.5 2.5 L7.5 7.5 M7.5 2.5 L2.5 7.5" stroke="#000" stroke-width="0.9"/></svg>
<div class="t" style="letter-spacing:-0.073px;left:357.60px;top:407.44px;font-size:12px;font-weight:normal;color:#000;font-family:'Liberation Sans';">MY_TABLE2</div>
<div class="a" style="left:332px;top:423px;width:809px;height:1px;background:#a0a0a0"></div>
<div class="a" style="left:332px;top:424px;width:809px;height:1px;background:#fff"></div>
<div class="a" style="left:332px;top:425px;width:809px;height:26px;background:#dcdcdc"></div>
<div class="a" style="left:332px;top:404px;width:1px;height:256px;background:#f4f4f4"></div>
<div class="a" style="left:1141px;top:423px;width:1px;height:239px;background:#8a8a8a"></div>
<div class="a" style="left:335px;top:427px;width:44px;height:22px;border:1px solid #888;border-radius:3px;background:linear-gradient(#f6f6f6,#e4e4e4 45%,#d2d2d2);box-shadow:inset -2px -1px 2px rgba(0,0,0,.08)"></div>
<div class="t" style="letter-spacing:-0.700px;left:338.30px;top:432.19px;font-size:11px;font-weight:normal;color:#000;font-family:'Liberation Sans';">OFF</div>
<svg class="a" style="left:367.0px;top:435.0px;" width="8" height="5" viewBox="0 0 8 5"><polygon points="0,0 8,0 4.0,5" fill="#000"/></svg>
<svg class="a" style="left:387px;top:431px;" width="15" height="15" viewBox="0 0 15 15"><rect x="0.5" y="0.5" width="14" height="14" rx="1.5" fill="#bcd0ec" stroke="#6a84b4"/><rect x="3" y="0.5" width="9" height="6" fill="#f0f4fa" stroke="#8aa0c8" stroke-width="0.8"/><rect x="3" y="5.5" width="9" height="1" fill="#e8c880"/><rect x="4" y="9.5" width="7" height="5" fill="#e8eef8" stroke="#8aa0c8" stroke-width="0.8"/><rect x="5" y="12" width="4" height="2" fill="#e8c070"/></svg>
<svg class="a" style="left:413px;top:431px;" width="15" height="16" viewBox="0 0 15 16"><path d="M2 2 H14 M2 6 H14 M8 10 H14" stroke="#1a5aa8" stroke-width="1.8"/><path d="M0.8 15 L2 12 L9.5 4.5 L11.5 6.5 L4 14 Z" fill="#f0d8a0" stroke="#a07830" stroke-width="0.9"/><path d="M0.8 15 L2 12 L4 14 Z" fill="#203a70"/></svg>
<svg class="a" style="left:450px;top:430px;" width="16" height="17" viewBox="0 0 16 17"><path d="M7 3 Q11 1 13.5 4 L15.5 2.5 V8.5 H9.5 L11.5 6.5 Q10 5 8 6.5 Z" fill="#e8f4e8" stroke="#10b010" stroke-width="1.4"/><path d="M9 14 Q5 16 2.5 13 L0.5 14.5 V8.5 H6.5 L4.5 10.5 Q6 12 8 10.5 Z" fill="#e8f4e8" stroke="#10b010" stroke-width="1.4"/></svg>
<svg class="a" style="left:473px;top:432px;" width="18" height="11" viewBox="0 0 18 11"><ellipse cx="4.2" cy="7.3" rx="3.3" ry="2.4" fill="#fff" stroke="#203a70" stroke-width="1.2"/><ellipse cx="11.2" cy="7.3" rx="3.3" ry="2.4" fill="#fff" stroke="#203a70" stroke-width="1.2"/><path d="M1 7 Q1.2 2 4.5 1.3 M8 7 Q8.2 2 11.5 1.3 M14.5 6.5 Q15 3 17.5 3.8" fill="none" stroke="#203a70" stroke-width="1"/></svg>
<svg class="a" style="left:498px;top:430px;" width="17" height="16" viewBox="0 0 17 16"><path d="M1 9.5 L2 7 L9.5 0.8 L11 2.5 L4 9 Z" fill="#f0d8a0" stroke="#a07830" stroke-width="0.9"/><path d="M6 9 H10 V6.5 L15.5 10.5 L10 14.5 V12 H6 Z" fill="#a8d8d0" stroke="#2a5aa0" stroke-width="0.9"/></svg>
<svg class="a" style="left:522px;top:432px;" width="17" height="13" viewBox="0 0 17 13"><path d="M0.5 4 H4 V1.5 L8.5 5.5 L4 9.5 V7 H0.5 Z" fill="#f8d888" stroke="#c08010" stroke-width="0.9"/><path d="M10.5 1 V11.5 H13 M10.5 6 H13" fill="none" stroke="#5a7ab8" stroke-width="1"/><rect x="12.5" y="0.5" width="3" height="2" fill="#fff" stroke="#5a7ab8" stroke-width="0.8"/><rect x="12.5" y="5" width="3" height="2.5" fill="#fff" stroke="#5a7ab8" stroke-width="0.8"/><rect x="12.5" y="10" width="3" height="2.5" fill="#fff" stroke="#5a7ab8" stroke-width="0.8"/></svg>
<svg class="a" style="left:546px;top:430px;" width="17" height="16" viewBox="0 0 17 16"><path d="M3 0.5 H7 V5 H9.5 L5 9.5 L0.5 5 H3 Z" fill="#f8d888" stroke="#c08010" stroke-width="0.9"/><path d="M10 15.5 H14 V11 H16.5 L12 6.5 L7.5 11 H10 Z" fill="#f8d888" stroke="#c08010" stroke-width="0.9"/></svg>
<svg class="a" style="left:571px;top:430px;" width="16" height="16" viewBox="0 0 16 16"><path d="M5.5 4.5 H12 L15.5 8 V15.5 H5.5 Z" fill="#f6f2e2" stroke="#a08030"/><path d="M9 10.5 H14 M9 12.5 H14" stroke="#90a0c0" stroke-width="0.9"/><rect x="0.5" y="0.5" width="7" height="5" fill="#fff" stroke="#3070c0"/><path d="M2 3 H6" stroke="#3070c0" stroke-dasharray="1 1"/><path d="M1.5 6 Q2 10 7 10 V8 L11 11.5 L7 15 V13 Q1 13 1.5 6 Z" fill="#a8d8c0" stroke="#1060b0" stroke-width="1"/></svg>
<svg class="a" style="left:593px;top:431px;" width="16" height="16" viewBox="0 0 16 16"><path d="M3 1.5 H15 M3 5.5 H15 M8 9.5 H15" stroke="#1a5aa8" stroke-width="1.8"/><path d="M4 8 L5.5 11 L8 12 L5.5 13 L4 16 L2.5 13 L0 12 L2.5 11 Z" fill="#f6e08a" stroke="#b8861e" stroke-width="0.9"/></svg>
<svg class="a" style="left:620px;top:431px;" width="13" height="15" viewBox="0 0 13 15"><rect x="0.5" y="0.5" width="12" height="6.5" fill="#eef6fa" stroke="#b8b090"/><rect x="0.5" y="7.5" width="12" height="7" fill="#eef6fa" stroke="#8ca0c0"/><rect x="2" y="2.2" width="3" height="3" fill="#30a040"/><rect x="6" y="3.3" width="5" height="1" fill="#30a040"/><rect x="2" y="9.5" width="3" height="3" fill="#6070a8"/><rect x="6" y="10.6" width="5" height="1" fill="#6070a8"/></svg>
<svg class="a" style="left:643px;top:431px;" width="14" height="14" viewBox="0 0 14 14"><rect x="0.5" y="0.5" width="13" height="13" fill="#f4f6fa" stroke="#5a70a8"/><path d="M1 1 H5 L1 5 Z" fill="#203a70"/><path d="M6 5.5 H12 M6 7.5 H12 M6 9.5 H12 M6 11.5 H12" stroke="#8a9ac0" stroke-width="0.9"/></svg>
<svg class="a" style="left:667px;top:431px;" width="15" height="15" viewBox="0 0 15 15"><rect x="0.5" y="0.5" width="9" height="11" fill="#eef2f8" stroke="#b09860"/><path d="M2 2.5 H4 M2 4.5 H4 M2 6.5 H4 M2 8.5 H4" stroke="#4a6ab0" stroke-width="0.9"/><path d="M4.5 3.5 H11 L14.5 7 V14.5 H4.5 Z" fill="#f6f8fc" stroke="#b09860"/><path d="M6.5 6.5 H11 M6.5 8.5 H12.5 M6.5 10.5 H12.5 M6.5 12.5 H11" stroke="#4a6ab0" stroke-width="0.9"/></svg>
<svg class="a" style="left:690px;top:430px;" width="17" height="16" viewBox="0 0 17 16"><rect x="0.5" y="0.5" width="7" height="9" fill="#eef2f8" stroke="#b09860"/><path d="M2 2.5 H6 M2 4.5 H6 M2 6.5 H6" stroke="#4a6ab0" stroke-width="0.9"/><rect x="9.5" y="5.5" width="7" height="10" fill="#eef2f8" stroke="#b09860"/><path d="M11 8.5 H15 M11 10.5 H15 M11 12.5 H15" stroke="#4a6ab0" stroke-width="0.9"/><path d="M9 1.5 Q13 1 13.5 4.5 M2.5 10.5 Q3 14.5 7.5 14" fill="none" stroke="#2a5aa8" stroke-width="1.1"/></svg>
<svg class="a" style="left:726px;top:430px;" width="18" height="16" viewBox="0 0 18 16"><path d="M0.8 14.5 L3 9 L7 13 Z" fill="#fff8c0" stroke="#e8a020" stroke-width="0.9"/><path d="M3 9 L6 6 L10 10 L7 13 Z" fill="#b8b0c0" stroke="#806040" stroke-width="0.9"/><path d="M6 6 L12 0.8 L16.5 5 L10 10 Z" fill="#f8d878" stroke="#e8a020" stroke-width="1"/><circle cx="11" cy="4" r="0.8" fill="#3050a0"/><circle cx="12" cy="3" r="0.8" fill="#3050a0"/></svg>
<div class="a" style="left:748px;top:427px;width:149px;height:22px;background:#fff;border:1.5px solid #6a6a6a"></div>
<svg class="a" style="left:901px;top:432px;" width="16" height="12" viewBox="0 0 16 12"><path d="M0.8 3.5 H8 V0.8 L14.5 6 L8 11.2 V8.5 H0.8 Z" fill="#fbe0a0" stroke="#c88a10" stroke-width="1"/></svg>
<svg class="a" style="left:926px;top:430px;" width="14" height="16" viewBox="0 0 14 16"><path d="M2.5 5 H7 V2 L13 7 L7 12 V9 H4.5 V5 Z" fill="#fbe0a0" stroke="#c88a10" stroke-width="1"/><path d="M3 6 V14 M1 12 L3 14.5 L5 12" fill="none" stroke="#606060" stroke-width="1"/></svg>
<svg class="a" style="left:948px;top:429px;" width="18" height="17" viewBox="0 0 18 17"><path d="M9.5 0.5 H13 L16.5 4 V10.5 H9.5 Z" fill="#f6f2e2" stroke="#a08030"/><path d="M11 4 H13 M11 6 H15 M11 8 H15" stroke="#3070c0" stroke-width="0.8"/><rect x="2.5" y="10.5" width="9" height="5" fill="#fff" stroke="#3070c0"/><path d="M4 13 H10" stroke="#3070c0" stroke-dasharray="1 1"/><path d="M0.8 10 Q1 5 5 5 V3 L9 6.5 L5 10 V8 Q3 8 0.8 10 Z" fill="#58b040" stroke="#207020" stroke-width="0.9"/></svg>
<svg class="a" style="left:974px;top:429px;" width="16" height="17" viewBox="0 0 16 17"><path d="M0.5 2.5 H10.5 V10 L6 15.5 H0.5 Z" fill="#f8e488" stroke="#b09020"/><path d="M2.5 1 V3.5 M4.5 1 V3.5 M6.5 1 V3.5 M8.5 1 V3.5" stroke="#505050" stroke-width="0.7"/><path d="M2 6.5 H9 M2 8.5 H9 M2 10.5 H7" stroke="#7080b0" stroke-width="0.7"/><path d="M12.5 1.5 V7 M10 4.25 H15" stroke="#e8a020" stroke-width="1.5"/></svg>
<svg class="a" style="left:997px;top:430px;" width="16" height="17" viewBox="0 0 16 17"><rect x="0.5" y="0.5" width="13" height="13" rx="1.5" fill="#bcd0ec" stroke="#6a84b4"/><rect x="3" y="0.5" width="8" height="5" fill="#f0f4fa" stroke="#8aa0c8" stroke-width="0.8"/><rect x="4" y="8.5" width="6" height="5" fill="#e8eef8" stroke="#8aa0c8" stroke-width="0.8"/><path d="M9 15.5 H16" stroke="#203a70" stroke-width="1.5" stroke-dasharray="1.2 1"/></svg>
<svg class="a" style="left:1023px;top:430px;" width="13" height="15" viewBox="0 0 13 15"><path d="M3.5 0.8 H8.5 V7 H12 L6 14 L0.8 7 H3.5 Z" fill="#fbe0a0" stroke="#c88a10" stroke-width="1"/></svg>
<svg class="a" style="left:1044px;top:430px;" width="17" height="17" viewBox="0 0 17 17"><path d="M0.8 4.5 L5.5 0.8 V2.8 H12 V6.2 H5.5 V8.2 Z" fill="#fbe0a0" stroke="#c88a10" stroke-width="1"/><path d="M16.2 12 L11.5 15.7 V13.7 H5 V10.3 H11.5 V8.3 Z" fill="#fbe0a0" stroke="#c88a10" stroke-width="1"/></svg>
<div class="a" style="left:333px;top:451px;width:808px;height:211px;background:#fff"></div>
<div class="a" style="left:333px;top:451px;width:808px;height:1px;background:#6a6a6a"></div>
<div class="a" style="left:333px;top:451px;width:1px;height:209px;background:#8a8a8a"></div>
<div class="a" style="left:352px;top:452px;width:773px;height:1px;background:#fff"></div>
<div class="a" style="left:334px;top:453px;width:791px;height:18px;background:#dcdcdc"></div>
<div class="a" style="left:334px;top:469px;width:791px;height:1.5px;background:#8a8a8a"></div>
<div class="a" style="left:1124px;top:453px;width:1px;height:17px;background:#7a7a7a"></div>
<div class="a" style="left:1125px;top:453px;width:16px;height:18px;background:#dcdcdc"></div>
<div class="a" style="left:351px;top:453px;width:1px;height:17px;background:#7a7a7a"></div>
<div class="a" style="left:352px;top:453px;width:1px;height:16px;background:#fafafa"></div>
<div class="a" style="left:375px;top:453px;width:1px;height:17px;background:#7a7a7a"></div>
<div class="a" style="left:376px;top:453px;width:1px;height:16px;background:#fafafa"></div>
<div class="a" style="left:430px;top:453px;width:1px;height:17px;background:#7a7a7a"></div>
<div class="a" style="left:431px;top:453px;width:1px;height:16px;background:#fafafa"></div>
<div class="a" style="left:512px;top:453px;width:1px;height:17px;background:#7a7a7a"></div>
<div class="a" style="left:513px;top:453px;width:1px;height:16px;background:#fafafa"></div>
<div class="a" style="left:708px;top:453px;width:1px;height:17px;background:#7a7a7a"></div>
<div class="a" style="left:709px;top:453px;width:1px;height:16px;background:#fafafa"></div>
<div class="a" style="left:765px;top:453px;width:1px;height:17px;background:#7a7a7a"></div>
<div class="a" style="left:766px;top:453px;width:1px;height:16px;background:#fafafa"></div>
<div class="t" style="letter-spacing:-0.082px;left:358.30px;top:455.99px;font-size:12.3px;font-weight:normal;color:#000;font-family:'Liberation Sans';">ID</div>
<div class="t" style="letter-spacing:0.033px;left:385.80px;top:455.99px;font-size:12.3px;font-weight:normal;color:#000;font-family:'Liberation Sans';">NAME</div>
<div class="t" style="letter-spacing:-0.204px;left:443.30px;top:455.99px;font-size:12.3px;font-weight:normal;color:#000;font-family:'Liberation Sans';">ADDRESS</div>
<div class="t" style="letter-spacing:-0.305px;left:583.30px;top:455.99px;font-size:12.3px;font-weight:normal;color:#000;font-family:'Liberation Sans';">CREATED</div>
<div class="t" style="letter-spacing:-0.637px;left:715.00px;top:455.99px;font-size:12.3px;font-weight:normal;color:#000;font-family:'Liberation Sans';">SALARY</div>
<div class="a" style="left:334px;top:470.5px;width:17px;height:15px;background:#c6c6c6"></div>
<div class="a" style="left:351px;top:470.5px;width:1px;height:15px;background:#b4b4b4"></div>
<div class="a" style="left:351px;top:485.0px;width:415px;height:1px;background:#d8d8d8"></div>
<div class="a" style="left:351px;top:470.5px;width:1px;height:15px;background:#d0d0d0"></div>
<div class="a" style="left:375px;top:470.5px;width:1px;height:15px;background:#d0d0d0"></div>
<div class="a" style="left:430px;top:470.5px;width:1px;height:15px;background:#d0d0d0"></div>
<div class="a" style="left:512px;top:470.5px;width:1px;height:15px;background:#d0d0d0"></div>
<div class="a" style="left:708px;top:470.5px;width:1px;height:15px;background:#d0d0d0"></div>
<div class="a" style="left:765px;top:470.5px;width:1px;height:15px;background:#d0d0d0"></div>
<div class="t" style="left:334.50px;top:472.72px;font-size:12.5px;font-weight:normal;color:#000;font-family:'Liberation Sans';">1</div>
<div class="t" style="left:352.70px;top:472.72px;font-size:12.5px;font-weight:normal;color:#000;font-family:'Liberation Sans';">1</div>
<div class="t" style="letter-spacing:0.470px;left:376.30px;top:472.72px;font-size:12.5px;font-weight:normal;color:#000;font-family:'Liberation Sans';">yiibai</div>
<div class="t" style="letter-spacing:0.826px;left:431.70px;top:472.72px;font-size:12.5px;font-weight:normal;color:#000;font-family:'Liberation Sans';">Haikou</div>
<div class="t" style="letter-spacing:0.919px;left:513.80px;top:472.72px;font-size:12.5px;font-weight:normal;color:#000;font-family:'Liberation Sans';">2018-10-10 10:10:12.000000</div>
<div class="t" style="letter-spacing:1.096px;left:710.00px;top:472.72px;font-size:12.5px;font-weight:normal;color:#000;font-family:'Liberation Sans';">21000</div>
<div class="a" style="left:351px;top:485.5px;width:414px;height:15px;background:#efefef"></div>
<div class="a" style="left:334px;top:485.5px;width:17px;height:15px;background:#c6c6c6"></div>
<div class="a" style="left:351px;top:485.5px;width:1px;height:15px;background:#b4b4b4"></div>
<div class="a" style="left:351px;top:500.0px;width:415px;height:1px;background:#d8d8d8"></div>
<div class="a" style="left:351px;top:485.5px;width:1px;height:15px;background:#d0d0d0"></div>
<div class="a" style="left:375px;top:485.5px;width:1px;height:15px;background:#d0d0d0"></div>
<div class="a" style="left:430px;top:485.5px;width:1px;height:15px;background:#d0d0d0"></div>
<div class="a" style="left:512px;top:485.5px;width:1px;height:15px;background:#d0d0d0"></div>
<div class="a" style="left:708px;top:485.5px;width:1px;height:15px;background:#d0d0d0"></div>
<div class="a" style="left:765px;top:485.5px;width:1px;height:15px;background:#d0d0d0"></div>
<div class="t" style="left:334.50px;top:487.72px;font-size:12.5px;font-weight:normal;color:#000;font-family:'Liberation Sans';">2</div>
<div class="t" style="left:352.70px;top:487.72px;font-size:12.5px;font-weight:normal;color:#000;font-family:'Liberation Sans';">3</div>
<div class="t" style="letter-spacing:1.101px;left:376.30px;top:487.72px;font-size:12.5px;font-weight:normal;color:#000;font-family:'Liberation Sans';">hippo2</div>
<div class="t" style="letter-spacing:0.846px;left:431.70px;top:487.72px;font-size:12.5px;font-weight:normal;color:#000;font-family:'Liberation Sans';">Shanghai</div>
<div class="t" style="letter-spacing:0.919px;left:513.80px;top:487.72px;font-size:12.5px;font-weight:normal;color:#000;font-family:'Liberation Sans';">2018-10-12 12:10:12.000000</div>
<div class="t" style="letter-spacing:1.096px;left:710.00px;top:487.72px;font-size:12.5px;font-weight:normal;color:#000;font-family:'Liberation Sans';">15999</div>
<div class="a" style="left:334px;top:500.5px;width:17px;height:15px;background:#c6c6c6"></div>
<div class="a" style="left:351px;top:500.5px;width:1px;height:15px;background:#b4b4b4"></div>
<div class="a" style="left:351px;top:515.0px;width:415px;height:1px;background:#d8d8d8"></div>
<div class="a" style="left:351px;top:500.5px;width:1px;height:15px;background:#d0d0d0"></div>
<div class="a" style="left:375px;top:500.5px;width:1px;height:15px;background:#d0d0d0"></div>
<div class="a" style="left:430px;top:500.5px;width:1px;height:15px;background:#d0d0d0"></div>
<div class="a" style="left:512px;top:500.5px;width:1px;height:15px;background:#d0d0d0"></div>
<div class="a" style="left:708px;top:500.5px;width:1px;height:15px;background:#d0d0d0"></div>
<div class="a" style="left:765px;top:500.5px;width:1px;height:15px;background:#d0d0d0"></div>
<div class="t" style="left:334.50px;top:502.72px;font-size:12.5px;font-weight:normal;color:#000;font-family:'Liberation Sans';">3</div>
<div class="t" style="left:352.70px;top:502.72px;font-size:12.5px;font-weight:normal;color:#000;font-family:'Liberation Sans';">2</div>
<div class="t" style="letter-spacing:0.755px;left:376.30px;top:502.72px;font-size:12.5px;font-weight:normal;color:#000;font-family:'Liberation Sans';">maxsu</div>
<div class="t" style="letter-spacing:0.651px;left:431.70px;top:502.72px;font-size:12.5px;font-weight:normal;color:#000;font-family:'Liberation Sans';">Guangzhou</div>
<div class="t" style="letter-spacing:0.919px;left:513.80px;top:502.72px;font-size:12.5px;font-weight:normal;color:#000;font-family:'Liberation Sans';">2019-12-12 12:12:12.000000</div>
<div class="t" style="letter-spacing:1.179px;left:710.00px;top:502.72px;font-size:12.5px;font-weight:normal;color:#000;font-family:'Liberation Sans';">9999</div>
<div class="a" style="left:1125px;top:471px;width:16px;height:189px;background:#dcdcdc;border-left:1px solid #7c7c7c"></div>
<div class="a" style="left:1125px;top:471px;width:16px;height:16px;border:1px solid #7c7c7c;background:linear-gradient(135deg,#fdfdfd,#dedede 50%,#c8c8c8);box-shadow:inset 1px 1px 0 #fff"></div>
<svg class="a" style="left:1128.8px;top:476.7px;" width="8.4" height="4.6" viewBox="0 0 8.4 4.6"><polygon points="0,4.6 8.4,4.6 4.2,0" fill="#000"/></svg>
<div class="a" style="left:1125px;top:644px;width:16px;height:16px;border:1px solid #7c7c7c;background:linear-gradient(135deg,#fdfdfd,#dedede 50%,#c8c8c8);box-shadow:inset 1px 1px 0 #fff"></div>
<svg class="a" style="left:1128.8px;top:649.7px;" width="8.4" height="4.6" viewBox="0 0 8.4 4.6"><polygon points="0,0 8.4,0 4.2,4.6" fill="#000"/></svg>
<div class="a" style="left:333px;top:660px;width:810px;height:2px;background:#707070"></div>
<div class="a" style="left:1140px;top:451px;width:2px;height:211px;background:#707070"></div>
<div class="a" style="left:1142px;top:404px;width:3px;height:283px;background:#fff"></div>
<div class="a" style="left:329px;top:662px;width:816px;height:1px;background:#fff"></div>
<div class="a" style="left:331px;top:663px;width:812px;height:22px;background:#c0c0c0"></div>
<div class="a" style="left:1143px;top:663px;width:2px;height:24px;background:#fff"></div>
<div class="a" style="left:331px;top:685px;width:814px;height:2px;background:#fff"></div>
<svg class="a" style="left:336px;top:669px;" width="11" height="11" viewBox="0 0 11 11"><defs><linearGradient id="cbg" x1="0" y1="0" x2="0" y2="1"><stop offset="0" stop-color="#a4a4a4"/><stop offset="1" stop-color="#b8b8b8"/></linearGradient></defs><rect x="0.5" y="0.5" width="10" height="10" rx="1.5" fill="#e4e4e4" stroke="#a0a0a0"/><rect x="2" y="2" width="7" height="7" fill="url(#cbg)"/></svg>
<svg class="a" style="left:355px;top:666px;" width="12" height="15" viewBox="0 0 12 15"><path d="M3.5 7 L8.8 2.2 L10.8 7.8 L5.2 13.5 L3.2 12 L6.5 8.8 Z" fill="#f2e46a" stroke="#4a64a8" stroke-width="0.9"/><path d="M1 5.6 L6.6 0.9 Q8.6 0.3 9 2.2 L3.5 7.2 Q1.4 7.6 1 5.6 Z" fill="#f2eeb4" stroke="#a89a44" stroke-width="0.9"/><circle cx="4.2" cy="13" r="1.5" fill="#f6dc20" stroke="#3a54a0" stroke-width="0.8"/></svg>
<div class="t" style="letter-spacing:-0.024px;left:374.00px;top:668.69px;font-size:11px;font-weight:normal;color:#000;font-family:'Liberation Sans';">19:16:35:480 Executing Statement . . . Done. Query Time: 0.006   Row Count: 3</div>
</body></html>
